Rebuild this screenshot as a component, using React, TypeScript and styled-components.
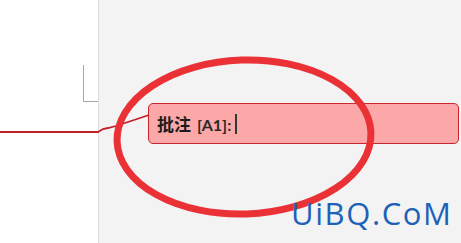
import React from "react";
import styled, { createGlobalStyle } from "styled-components";

const Global = createGlobalStyle`
  html, body { margin: 0; padding: 0; }
  body { width: 461px; height: 243px; overflow: hidden; background: #f3f3f3; }
`;

const Page = styled.div`
  position: relative;
  width: 461px;
  height: 243px;
  display: flex;
  overflow: hidden;
  font-family: "Noto Sans CJK SC", sans-serif;
`;

const DocColumn = styled.div`
  width: 99px;
  flex: none;
  background: #ffffff;
  border-right: 1px solid #dcdcdc;
  display: flex;
  justify-content: flex-end;
  padding-top: 65px;
  box-sizing: border-box;
`;

const CornerMark = styled.div`
  width: 14px;
  height: 36px;
  border-left: 1px solid #a8a8a8;
  border-bottom: 1px solid #a8a8a8;
`;

const Margin = styled.div`
  flex: 1;
  background: #f3f3f3;
  padding-top: 103px;
  padding-left: 49px;
  padding-right: 2px;
  box-sizing: border-box;
`;

const CommentBox = styled.div`
  height: 41px;
  box-sizing: border-box;
  background: #fca8a8;
  border: 1.5px solid #c9262e;
  border-radius: 5px;
  display: flex;
  align-items: center;
  padding-left: 8px;
`;

const Text = styled.div`
  display: flex;
  align-items: baseline;
  gap: 6px;
`;

const Label = styled.span`
  font-family: "Noto Sans CJK SC", sans-serif;
  font-weight: 700;
  font-size: 17px;
  color: #1b1b1b;
  line-height: 1;
`;

const Ref = styled.span`
  font-family: Lato, "Open Sans", sans-serif;
  font-weight: 700;
  font-size: 16px;
  color: #2a2a2a;
  line-height: 1;
`;

const Caret = styled.span`
  width: 2px;
  height: 20px;
  background: #2e3a34;
  margin-left: 4px;
`;

const Overlay = styled.svg`
  position: absolute;
  left: 0;
  top: 0;
  pointer-events: none;
`;

const Watermark = styled.div`
  position: absolute;
  left: 291px;
  top: 198px;
  font-family: "Open Sans", sans-serif;
  font-size: 31px;
  color: #1d62b8;
  letter-spacing: 1.6px;
  line-height: 1;
`;

export default function App() {
  return (
    <>
      <Global />
      <Page>
        <DocColumn>
          <CornerMark />
        </DocColumn>
        <Margin>
          <CommentBox>
            <Text>
              <Label>批注</Label>
              <Ref>[A1]:</Ref>
            </Text>
            <Caret />
          </CommentBox>
        </Margin>
        <Overlay width="461" height="243" viewBox="0 0 461 243">
          <polyline
            points="0,132 98,132 103,129 108,128 116,126 128,122 140,118 149,115"
            fill="none"
            stroke="#c4202a"
            strokeWidth="1.8"
          />
          <ellipse
            cx="244"
            cy="137"
            rx="127"
            ry="77"
            fill="none"
            stroke="#ea3236"
            strokeWidth="7"
            transform="rotate(-2 244 137)"
          />
        </Overlay>
        <Watermark>UiBQ.CoM</Watermark>
      </Page>
    </>
  );
}
